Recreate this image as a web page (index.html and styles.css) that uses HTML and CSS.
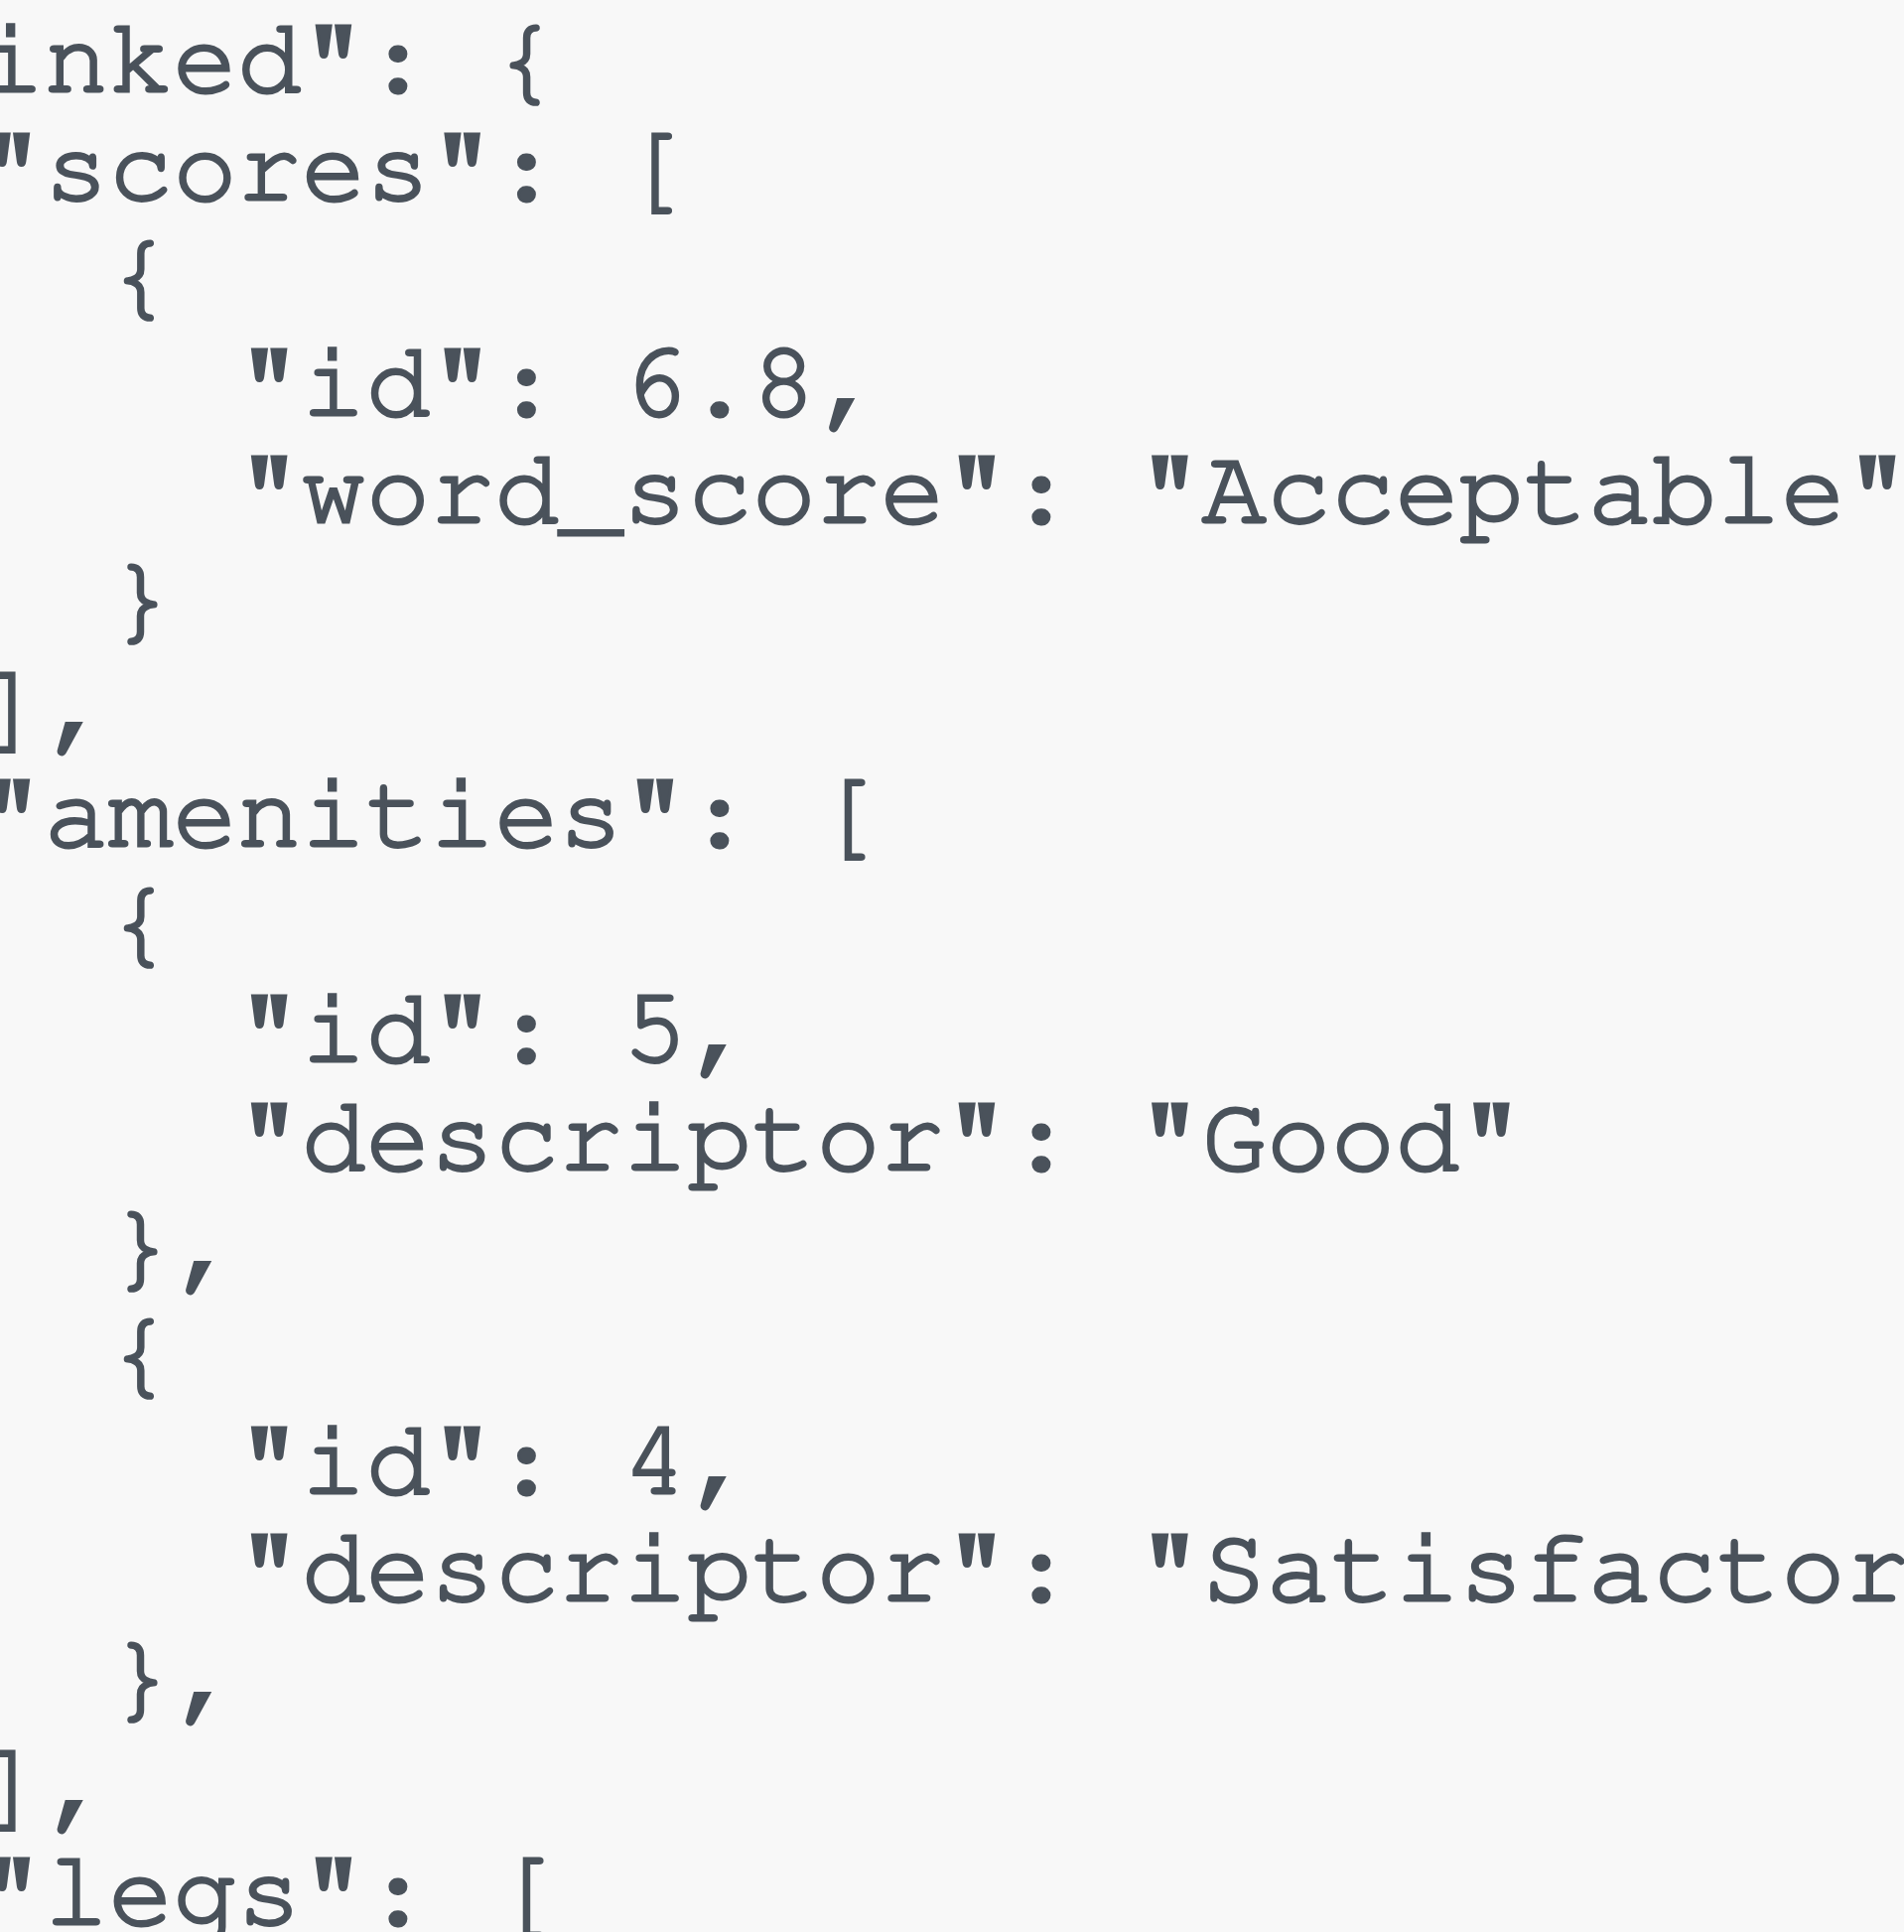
FILE: index.html
```html
<!DOCTYPE html>
<html lang="en">
<head>
<meta charset="utf-8">
<title>JSON</title>
<link rel="stylesheet" href="styles.css">
</head>
<body>
<pre class="code">"linked": {
  "scores": [
    {
      "id": 6.8,
      "word_score": "Acceptable"
    }
  ],
  "amenities": [
    {
      "id": 5,
      "descriptor": "Good"
    },
    {
      "id": 4,
      "descriptor": "Satisfactory"
    },
  ],
  "legs": [</pre>
</body>
</html>
```
FILE: styles.css
```css
html, body {
  margin: 0;
  padding: 0;
  overflow: hidden;
  background: #f8f8f8;
  width: 1918px;
  height: 1946px;
}

.code {
  margin: 6px 0 0 -150px;
  font-family: "Nimbus Mono PS", "Nimbus Mono L", "FreeMono", "Courier 10 Pitch", "Liberation Mono", monospace;
  font-size: 108px;
  line-height: 108.6px;
  color: #4a525b;
  -webkit-text-stroke: 3px #4a525b;
  white-space: pre;
}
```
